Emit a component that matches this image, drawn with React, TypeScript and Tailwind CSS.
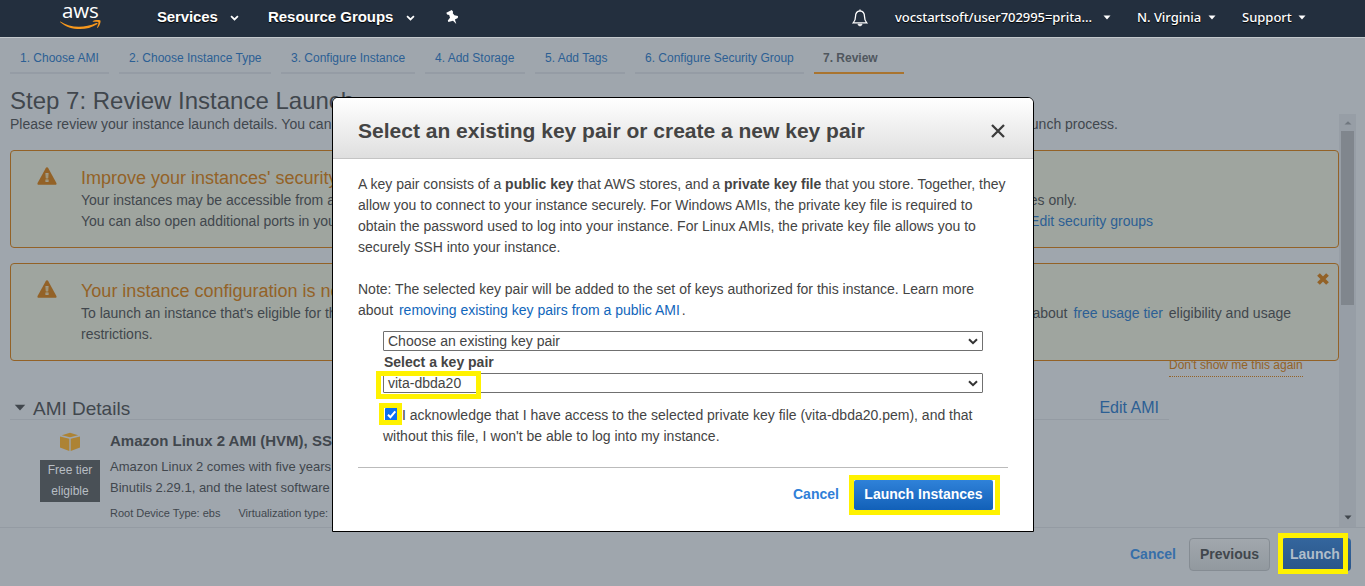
import React from "react";

const Caret = ({ className = "" }: { className?: string }) => (
  <svg viewBox="0 0 8 5" preserveAspectRatio="none" className={className}>
    <path d="M0.500 0.500H7.500L4 4.600Z" fill="currentColor" />
  </svg>
);

const Chevron = ({ className = "" }: { className?: string }) => (
  <svg viewBox="0 0 10 7" className={className} fill="none" stroke="currentColor" strokeWidth="2">
    <path d="M1 1.200L5 5.200L9 1.200" />
  </svg>
);

const Warning = () => (
  <svg viewBox="0 0 20 18" className="mt-[16px] ml-[26px] h-[18px] w-5 shrink-0">
    <path d="M10 0.300C10.600 0.300 11 0.700 11.300 1.200L19.400 16C19.900 17 19.400 17.800 18.400 17.800H1.600C0.600 17.800 0.100 17 0.600 16L8.700 1.200C9 0.700 9.400 0.300 10 0.300Z" fill="#936227" />
    <path d="M8.500 6H11.500L11.200 11.200H8.800ZM8.500 12.400H11.500V15H8.500Z" fill="#9fa59f" />
    <path d="M9.500 6.500H10.500V14.500H9.500Z" fill="#a08557" />
  </svg>
);

const steps = [
  { label: "1. Choose AMI", width: "w-[99px]" },
  { label: "2. Choose Instance Type", width: "w-[152px]" },
  { label: "3. Configure Instance", width: "w-[134px]" },
  { label: "4. Add Storage", width: "w-[100px]" },
  { label: "5. Add Tags", width: "w-[90px]" },
  { label: "6. Configure Security Group", width: "w-[169px]" },
];

function TopBar() {
  return (
    <header className="flex h-[38px] shrink-0 border-b border-[#c3c8cc] bg-[#232f3e] text-white">
      <div className="flex w-[157px] flex-col items-start pl-[60px]">
        <span className="ml-[2px] h-[20px] pt-px font-['Open_Sans'] text-[20.500px] leading-[19px] font-medium tracking-[-0.200px]">aws</span>
        <svg viewBox="0 0 42 10" className="h-[10px] w-[42px]">
          <path d="M0.400 1.600C10 8 24 8.600 36.200 3.100C37.400 2.600 38.200 3.500 37.100 4.300C26 11.500 9.500 10.500 0.300 2.200C-0.100 1.800 0.100 1.400 0.400 1.600Z" fill="#f7981d" />
          <path d="M33 1C35.500 -0.400 39.600 -0.300 40.400 0.500C41 1.400 39.900 6 37.700 7.800C37.200 8.200 36.900 7.900 37.100 7.400C37.800 5.700 38.900 2.900 38.300 2.200C37.700 1.500 35 1.600 33.400 1.800C32.700 1.900 32.500 1.400 33 1Z" fill="#f7981d" />
        </svg>
      </div>
      <nav className="flex h-[34px] flex-1 items-center font-['Liberation_Sans'] text-[15px] font-bold [text-shadow:0_1px_1px_#000]">
        <span className="w-[73px] tracking-[-0.130px]">Services</span>
        <Chevron className="mt-[2px] h-[6px] w-[9px]" />
        <span className="ml-[29px] w-[138px] tracking-[-0.030px]">Resource Groups</span>
        <Chevron className="mt-[2px] h-[6px] w-[9px]" />
        <svg viewBox="0 0 12 14" className="ml-[31px] h-[14px] w-3">
          <path d="M0.300 2.700L5.800 0L7.100 1.800L6.800 3.200L8.400 5.200L12 6L11.800 8L8.900 9.600L10.300 13.900L7 10.800L2.400 12L1.800 10.400L4 7.700L3.200 5L1.100 4.500Z" fill="#fff" />
        </svg>
      </nav>
      <div className="flex h-[35px] w-[514px] items-center font-['Noto_Sans'] text-[13px] font-medium [text-shadow:0_1px_1px_#000]">
        <svg viewBox="0 0 16 18" className="mr-[27px] ml-[1px] h-[18px] w-4" fill="none" stroke="#fff" strokeWidth="1.300">
          <path d="M8 1.800C4.800 2 3.500 4.300 3.500 7.500C3.500 10.500 3 12.200 1.200 13.900H14.800C13 12.200 12.500 10.500 12.500 7.500C12.500 4.300 11.200 2 8 1.800ZM8 0.500V2" />
          <path d="M6 15.200C6.300 17.300 9.700 17.300 10 15.200Z" fill="#fff" strokeWidth="0.800" />
        </svg>
        <span className="w-[208px] tracking-[-0.060px] whitespace-nowrap">vocstartsoft/user702995=prita...</span>
        <Caret className="h-[5px] w-2" />
        <span className="ml-[26px] w-[71px] tracking-[-0.040px] whitespace-nowrap">N. Virginia</span>
        <Caret className="h-[5px] w-2" />
        <span className="ml-[26px] w-[56px]">Support</span>
        <Caret className="h-[5px] w-2" />
      </div>
    </header>
  );
}

function Wizard() {
  return (
    <main className="flex h-[548px] flex-col bg-[#9fa6ad] text-[14px] leading-[21px] text-[#41474d]">
      <div className="flex h-[36px] shrink-0 gap-[10px] pl-[10px] text-[12px] text-[#2c5f94]">
        {steps.map((s) => (
          <div key={s.label} className={`${s.width} border-b-2 border-[#959ca5] pt-[10px] pl-[10px] whitespace-nowrap`}>{s.label}</div>
        ))}
        <div className="w-[90px] border-b-2 border-[#a9742f] pt-[10px] pl-[9px] font-bold text-[#50575e]">7. Review</div>
      </div>
      <h1 className="mt-[12px] ml-[10px] h-[28px] text-[24px] leading-[30px]">Step 7: Review Instance Launch</h1>
      <div className="flex h-[414px] shrink-0 border-b border-[#949ba3]">
        <div className="ml-[10px] flex w-[1329px] flex-col overflow-hidden">
          <p className="flex h-[36px] w-[1108px] shrink-0 justify-between whitespace-nowrap">
            <span>Please review your instance launch details. You can</span>
            <span>launch process.</span>
          </p>
          <section className="flex h-[98px] shrink-0 rounded border border-[#936227] bg-[#9fa59f]">
            <Warning />
            <div className="ml-6 whitespace-nowrap">
              <h2 className="mt-[17px] h-[22px] text-[18px] text-[#936227]">Improve your instances' security.</h2>
              <p className="flex w-[996px] justify-between"><span>Your instances may be accessible from any</span><span>addresses only.</span></p>
              <p className="flex w-[1072px] justify-between"><span>You can also open additional ports in your</span><span className="text-[#2c5f94]">Edit security groups</span></p>
            </div>
          </section>
          <section className="mt-[15px] flex h-[98px] shrink-0 rounded border border-[#936227] bg-[#9fa59f]">
            <Warning />
            <div className="ml-6 whitespace-nowrap">
              <h2 className="mt-[17px] h-[22px] text-[18px] text-[#936227]">Your instance configuration is not</h2>
              <p className="flex w-[1210px] justify-between"><span>To launch an instance that's eligible for the</span><span>about <span className="mx-[2px] text-[#2c5f94]">free usage tier</span> eligibility and usage</span></p>
              <p>restrictions.</p>
            </div>
            <svg viewBox="0 0 12 12" className="mt-[9px] ml-[26px] h-3 w-3" stroke="#936227" strokeWidth="3.800"><path d="M1.500 1.500L10.500 10.500M10.500 1.500L1.500 10.500" /></svg>
          </section>
          <div className="ml-[1159px] flex h-[16px] w-[134px] shrink-0 items-end overflow-hidden border-b border-dotted border-[#936227] text-[12px] text-[#936227]"><span className="h-[21px] whitespace-nowrap">Don't show me this again</span></div>
          <div className="mt-[19px] flex h-[24px] w-[1159px] shrink-0 items-center border-b border-[#949ba3] pr-[10px]">
            <Caret className="ml-1 h-[7px] w-3" />
            <h2 className="mt-[2px] ml-[7px] flex-1 text-[19px]">AMI Details</h2>
            <span className="text-[16px] text-[#2c5f94]">Edit AMI</span>
          </div>
          <div className="flex">
            <div className="ml-[30px] flex w-[60px] flex-col items-center text-[12px] text-[#b8bec4]">
              <svg viewBox="0 0 20 20" preserveAspectRatio="none" className="mt-[12px] h-5 w-5"><path d="M0 4.500L9.300 6.700V19L0 15.500ZM10.700 6.700L20 4.500V15.500L10.700 19ZM1.800 3.200L10 0.800L18.200 3.200L10 5.300Z" fill="#ad8334" /></svg>
              <div className="mt-[8px] h-[42px] w-[60px] bg-[#495056] text-center">Free tier<br />eligible</div>
            </div>
            <div className="ml-[10px] whitespace-nowrap">
              <h3 className="mt-[10px] text-[15px] font-bold">Amazon Linux 2 AMI (HVM), SSD</h3>
              <p className="mt-[5px] w-[500px] text-[13px]">Amazon Linux 2 comes with five years<br />Binutils 2.29.1, and the latest software</p>
              <p className="mt-[5px] flex gap-[18px] text-[11px]"><span>Root Device Type: ebs</span><span>Virtualization type:</span></p>
            </div>
          </div>
        </div>
        <div className="flex w-[17px] flex-col items-center bg-[#979ea6]">
          <Caret className="mt-[7px] h-[4px] w-[8px] rotate-180 text-[#70777f]" />
          <div className="mt-[6px] h-[174px] w-[13px] bg-[#80868d]" />
          <Caret className="mt-auto mb-[7px] h-[5px] w-2" />
        </div>
      </div>
      <footer className="flex flex-1 items-start pt-[10px] text-[14px] font-bold">
        <span className="mt-[6px] ml-[1130px] w-[59px] text-[#376fa9]">Cancel</span>
        <button className="h-[33px] w-[81px] rounded border border-[#858c93] bg-linear-to-b from-[#a1a7ad] to-[#92999f] text-[#41474d]">Previous</button>
        <button className="relative ml-[12px] h-[33px] w-[69px] rounded bg-linear-to-b from-[#34669d] to-[#2a5589] pl-[8px] text-left text-[#b1bdca]">
          Launch
          <span className="absolute -top-[5px] -left-[4px] h-[41px] w-[70px] border-[5px] border-[#fff200]" />
        </button>
      </footer>
    </main>
  );
}

const Select = ({ children }: { children: React.ReactNode }) => (
  <div className="flex h-5 w-[600px] items-center justify-between rounded-[1px] border border-[#707070] px-[4px]">
    <span>{children}</span>
    <Chevron className="h-[7px] w-[10px] text-[#333]" />
  </div>
);

function KeyPairDialog() {
  return (
    <div role="dialog" className="absolute top-[97px] left-[332px] flex h-[435px] w-[702px] flex-col rounded-t-[6px] border border-black bg-white text-[14px] leading-[21px] text-[#444]">
      <header className="flex h-[61px] shrink-0 items-center justify-between rounded-t-[5px] border-b border-[#c4c4c4] bg-linear-to-b from-white to-[#dfdfdf] pr-[28px] pl-[25px]">
        <h2 className="mt-[5px] text-[21px] font-bold whitespace-nowrap">Select an existing key pair or create a new key pair</h2>
        <svg viewBox="0 0 14 14" className="mt-[6px] h-[14px] w-[14px]" stroke="#3c3c3c" strokeWidth="2.300"><path d="M1 1L13 13M13 1L1 13" /></svg>
      </header>
      <div className="px-[25px] pt-[15px] whitespace-nowrap">
        <p>
          A key pair consists of a <b>public key</b> that AWS stores, and a <b>private key file</b> that you store. Together, they<br />
          allow you to connect to your instance securely. For Windows AMIs, the private key file is required to<br />
          obtain the password used to log into your instance. For Linux AMIs, the private key file allows you to<br />
          securely SSH into your instance.
        </p>
        <p className="mt-[21px]">
          Note: The selected key pair will be added to the set of keys authorized for this instance. Learn more<br />
          about <span className="mx-[2px] text-[#1166bb]">removing existing key pairs from a public AMI</span>.
        </p>
        <div className="mt-[10px] ml-[25px]">
          <Select>Choose an existing key pair</Select>
          <div className="mt-[1px] ml-[1px] font-bold">Select a key pair</div>
          <div className="relative">
            <Select>vita-dbda20</Select>
            <span className="absolute -top-[2px] -left-[7px] h-[28px] w-[105px] border-[5px] border-[#fff200]" />
          </div>
          <div className="mt-[12px]">
            <span className="relative inline-block h-[13px] w-[19px] align-[-1px]">
              <svg viewBox="0 0 13 13" className="ml-[2px] h-[13px] w-[13px]"><rect width="13" height="13" rx="1" fill="#0b70f3" /><path d="M3 6.800L5.400 9.200L10.300 3.300" fill="none" stroke="#fff" strokeWidth="2" /></svg>
              <span className="absolute -top-[5px] -left-[4px] h-[22px] w-[23px] border-[5px] border-[#fff200]" />
            </span>
            I acknowledge that I have access to the selected private key file (vita-dbda20.pem), and that<br />
            without this file, I won't be able to log into my instance.
          </div>
        </div>
        <footer className="mt-[20px] flex items-start border-t border-[#bbb] pt-[12px] font-bold">
          <span className="mt-[4px] ml-[435px] w-[61px] text-[#2f7fd8]">Cancel</span>
          <button className="relative h-[30px] w-[139px] rounded-[2px] bg-linear-to-b from-[#2f82d9] to-[#1160b8] pb-[2px] text-white">
            Launch Instances
            <span className="absolute -top-[5px] -left-[5px] h-[40px] w-[151px] border-[5px] border-[#fff200]" />
          </button>
        </footer>
      </div>
    </div>
  );
}

export default function App() {
  return (
    <div className="relative h-[586px] w-full overflow-hidden bg-[#9fa6ad] font-['Liberation_Sans',sans-serif]">
      <TopBar />
      <Wizard />
      <KeyPairDialog />
    </div>
  );
}
